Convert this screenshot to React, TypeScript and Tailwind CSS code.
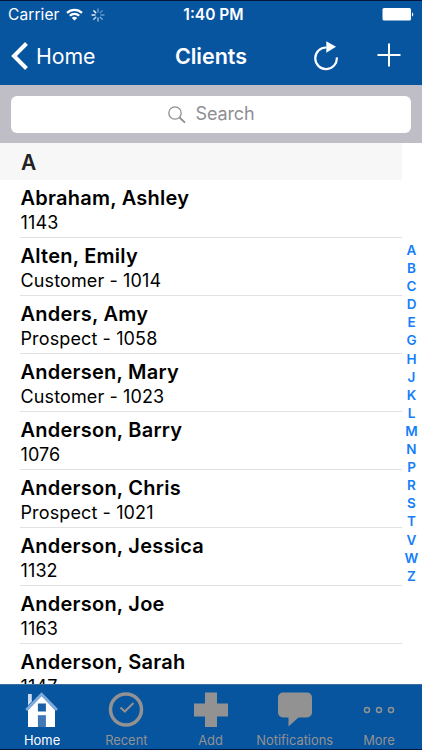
import React from "react";

interface Client {
    name: string;
    info: string;
}

interface TabProps {
    label: string;
    active?: boolean;
    children: React.ReactNode;
}

const clients: Client[] = [
    { name: "Abraham, Ashley", info: "1143" },
    { name: "Alten, Emily", info: "Customer - 1014" },
    { name: "Anders, Amy", info: "Prospect - 1058" },
    { name: "Andersen, Mary", info: "Customer - 1023" },
    { name: "Anderson, Barry", info: "1076" },
    { name: "Anderson, Chris", info: "Prospect - 1021" },
    { name: "Anderson, Jessica", info: "1132" },
    { name: "Anderson, Joe", info: "1163" },
    { name: "Anderson, Sarah", info: "1147" },
];

const letters = "ABCDEGHJKLMNPRSTVWZ".split("");

const StatusBar: React.FC = () => {
    return (
        <div className="grid h-[29px] grid-cols-3 items-center px-2 text-[15.5px] leading-[29px]">
            <div className="flex items-center">
                <span className="w-[51px] whitespace-nowrap tracking-[0.1px]">Carrier</span>
                <svg className="ml-[7px]" width="17" height="13" viewBox="0 0 17 13" fill="none" stroke="currentColor" strokeWidth="2.2">
                    <path d="M1 4.9C5.1.8 11.9.8 16 4.9" />
                    <path d="M3.8 7.8c2.6-2.5 6.8-2.5 9.4 0" />
                    <path d="M8.5 12.6 5.8 9.9c1.5-1.4 3.9-1.4 5.4 0Z" fill="currentColor" stroke="none" />
                </svg>
                <svg className="ml-2" width="14" height="14" viewBox="0 0 14 14" stroke="currentColor" strokeWidth="1.3" strokeLinecap="round">
                    <path d="M7 1v3" opacity=".45" />
                    <path d="m11.2 2.8-2 2" opacity=".35" />
                    <path d="M13 7h-3" opacity=".4" />
                    <path d="m11.2 11.2-2-2" opacity=".5" />
                    <path d="M7 13v-3" opacity=".65" />
                    <path d="m2.8 11.2 2-2" opacity=".8" />
                    <path d="M1 7h3" opacity=".9" />
                    <path d="m2.8 2.8 2 2" />
                </svg>
            </div>
            <span className="pl-[5px] text-center font-semibold whitespace-nowrap">1:40 PM</span>
            <svg className="justify-self-end" width="32" height="13" viewBox="0 0 32 13" fill="currentColor">
                <rect x="0.5" y="0" width="28.5" height="12.5" rx="1.5" />
                <path d="M30 4.5c1.6.3 1.6 3.7 0 4Z" />
            </svg>
        </div>
    );
};

const NavBar: React.FC = () => {
    return (
        <div className="grid h-[54px] grid-cols-3 items-center">
            <div className="flex items-center pl-[11px]">
                <svg width="18" height="28" viewBox="0 0 18 28" fill="none" stroke="currentColor" strokeWidth="4">
                    <path d="M15.5 1.5 3 14l12.5 12.5" />
                </svg>
                <span className="ml-[7px] text-[21.3px] leading-[54px] tracking-[-0.1px]">Home</span>
            </div>
            <span className="text-center text-[21.5px] leading-[54px] font-semibold">Clients</span>
            <div className="flex items-center justify-end pr-[21px]">
                <svg width="24" height="30" viewBox="0 0 24 30" fill="none" stroke="currentColor" strokeWidth="2.2">
                    <path d="M12.5 6.5A10.8 10.8 0 1 0 22.8 16.3" />
                    <path d="M12.3.3v11.4l9.7-6Z" fill="currentColor" stroke="none" />
                </svg>
                <svg className="mb-[3px] ml-[39px]" width="24" height="24" viewBox="0 0 24 24" stroke="currentColor" strokeWidth="2">
                    <path d="M12 .5v23M.5 12h23" />
                </svg>
            </div>
        </div>
    );
};

const ClientRow: React.FC<Client> = ({ name, info }) => {
    return (
        <li className="ml-[20px] h-[58px] w-[382px] shrink-0 border-b border-[#e2e2e4] pt-[6px] pl-[0.5px]">
            <p className="text-[20px] leading-[25px] font-semibold tracking-[0.24px]">{name}</p>
            <p className="text-[18px] leading-[23px] tracking-[0.12px]">{info}</p>
        </li>
    );
};

const Tab: React.FC<TabProps> = ({ label, active, children }) => {
    return (
        <div className={`flex flex-1 flex-col items-center pt-[7px] ${active ? "text-white" : "text-[#929292]"}`}>
            <div className="flex h-[36px] items-center justify-center">{children}</div>
            <span className="mt-[5px] text-[12.9px] leading-[16px] whitespace-nowrap">{label}</span>
        </div>
    );
};

const App: React.FC = () => {
    return (
        <main className="relative flex h-[750px] w-[422px] flex-col overflow-hidden bg-white font-['Inter',sans-serif] text-black">
            <header className="h-[85px] shrink-0 border-t border-[#05143c] bg-[#07549f] text-white">
                <div className="-mt-px">
                    <StatusBar />
                    <NavBar />
                </div>
            </header>

            <div className="h-[58px] shrink-0 bg-[#bfbec6] px-[11px] pt-[11px]">
                <div className="flex h-[37px] items-center justify-center rounded-[6px] bg-white text-[#8e8e93]">
                    <svg width="18" height="18" viewBox="0 0 18 18" fill="none" stroke="currentColor" strokeWidth="1.3">
                        <circle cx="7" cy="7" r="6.2" />
                        <path d="m11.5 11.5 5.5 5.2" strokeWidth="1.8" />
                    </svg>
                    <span className="-mt-[2px] ml-[10px] text-[18px] leading-[35px] tracking-[-0.15px]">Search</span>
                </div>
            </div>

            <section className="min-h-0 flex-1 overflow-hidden">
                <h2 className="h-[37px] w-[402px] bg-[#f7f7f7] pl-[21px] text-[21px] leading-[39px] font-semibold text-[#222]">A</h2>
                <ul className="flex flex-col">
                    {clients.map((client) => (
                        <ClientRow key={client.name} {...client} />
                    ))}
                </ul>
            </section>

            {/* alphabet index, floats over the list */}
            <div className="absolute top-[241px] right-0 flex w-[21px] flex-col items-center text-[13.5px] leading-[18.1px] font-semibold text-[#147efb]">
                {letters.map((letter) => (
                    <span key={letter}>{letter}</span>
                ))}
            </div>

            <nav className="flex h-[66px] shrink-0 border-t border-b border-t-[#386f9f] border-b-[#05143c] bg-[#07549f] pr-px">
                <Tab label="Home" active>
                    <svg width="34" height="36" viewBox="0 0 34 36">
                        <path d="M3 2h3.8v7.5L3 13.5Z" fill="#c9dcf0" />
                        <path d="M3 18 16.6 4l13.4 14v17H3Z" fill="white" />
                        <path d="M1.2 18 16.6 2.2 32 18" fill="none" stroke="#7eabdb" strokeWidth="2.6" />
                        <rect x="12.9" y="11.5" width="8" height="8" fill="#1b60a7" />
                        <rect x="12.9" y="23.2" width="8" height="11.8" fill="#3f78b4" />
                    </svg>
                </Tab>
                <Tab label="Recent">
                    <svg width="36" height="36" viewBox="0 0 36 36" fill="none" stroke="currentColor">
                        <circle cx="18" cy="17.5" r="15.5" strokeWidth="3.5" />
                        <path d="m12.5 15.5 4.3 4 8.7-8.5" strokeWidth="2" />
                    </svg>
                </Tab>
                <Tab label="Add">
                    <svg width="36" height="36" viewBox="0 0 36 36" fill="currentColor">
                        <path d="M12 .5h12v11h11v13H24V35H12V24.5H1v-13h11Z" />
                    </svg>
                </Tab>
                <Tab label="Notifications">
                    <svg width="36" height="36" viewBox="0 0 36 36" fill="currentColor">
                        <path d="M6 .5h24a5 5 0 0 1 5 5v15a5 5 0 0 1-5 5h-8.500l-10 9v-9H6a5 5 0 0 1-5-5v-15a5 5 0 0 1 5-5Z" />
                    </svg>
                </Tab>
                <Tab label="More">
                    <svg width="32" height="8" viewBox="0 0 32 8" fill="none" stroke="currentColor" strokeWidth="1.5">
                        <circle cx="4" cy="4" r="2.5" />
                        <circle cx="16" cy="4" r="2.5" />
                        <circle cx="28" cy="4" r="2.5" />
                    </svg>
                </Tab>
            </nav>
        </main>
    );
};

export default App;
